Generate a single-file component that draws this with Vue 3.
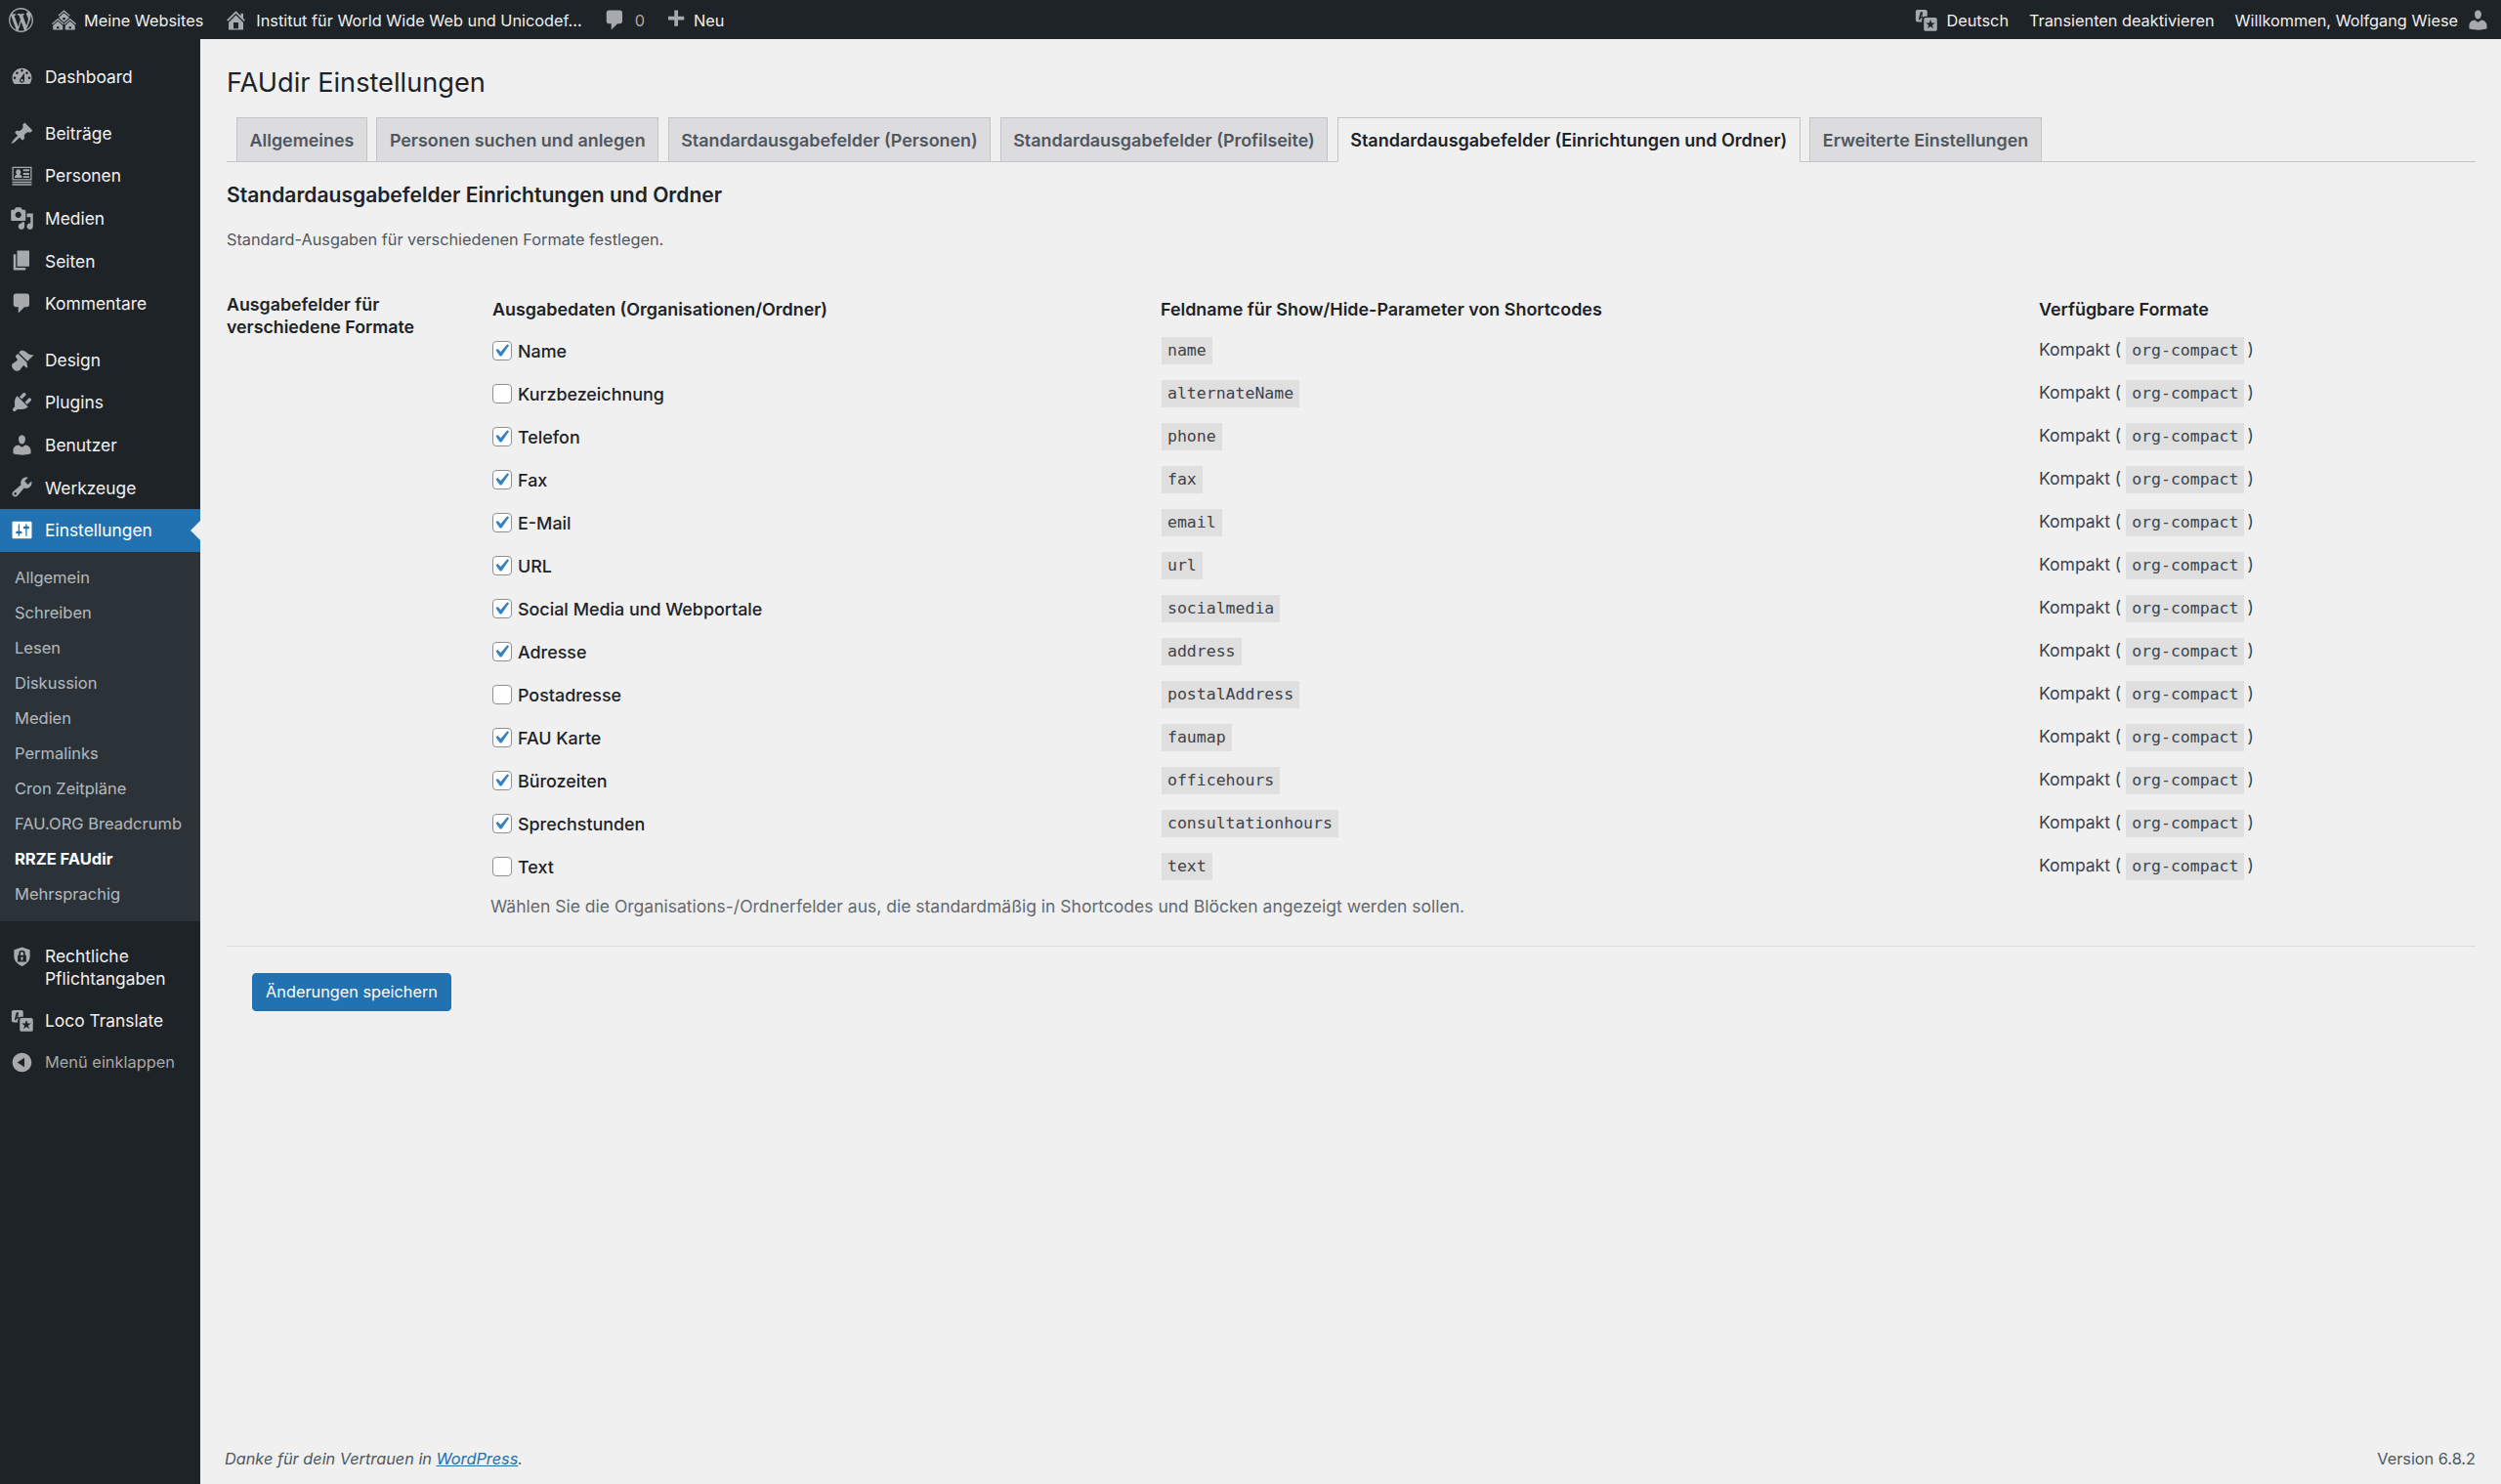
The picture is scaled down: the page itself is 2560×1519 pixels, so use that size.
<template>
  <div class="page">
    <header class="adminbar">
      <div class="bar-left">
        <svg class="bar-logo" viewBox="0 0 20 20"><path :d="icons.wp" /></svg>
        <a class="bar-item"><svg viewBox="0 0 20 20"><path :d="icons.multisite" /></svg>Meine Websites</a>
        <a class="bar-item site"><svg viewBox="0 0 20 20"><path :d="icons.home" /></svg>Institut für World Wide Web und Unicodef...</a>
        <a class="bar-item comments"><svg viewBox="0 0 20 20"><path :d="icons.comments" /></svg><span class="count">0</span></a>
        <a class="bar-item new"><svg viewBox="0 0 20 20"><path :d="icons.plus" /></svg>Neu</a>
      </div>
      <div class="bar-right">
        <a class="bar-item"><svg viewBox="0 0 20 20"><path fill-rule="evenodd" :d="icons.translate" /></svg>Deutsch</a>
        <a class="bar-item">Transienten deaktivieren</a>
        <a class="bar-item howdy">Willkommen, Wolfgang Wiese<svg viewBox="0 0 20 20"><path :d="icons.users" /></svg></a>
      </div>
    </header>

    <div class="body">
      <aside class="sidebar">
        <nav class="menu">
          <template v-for="item in menu" :key="item.label">
            <a class="menu-item" :class="{ active: item.active, gap: item.gap, tall: item.tall }">
              <svg viewBox="0 0 20 20"><path fill-rule="evenodd" :d="icons[item.icon]" /></svg>
              <span>{{ item.label }}</span>
            </a>
            <div v-if="item.active" class="submenu">
              <a v-for="sub in submenu" :key="sub" :class="{ current: sub === 'RRZE FAUdir' }">{{ sub }}</a>
            </div>
          </template>
          <a class="menu-item collapse">
            <svg viewBox="0 0 20 20"><path :d="icons.collapse" /></svg>
            <span>Menü einklappen</span>
          </a>
        </nav>
      </aside>

      <main class="content">
        <h1>FAUdir Einstellungen</h1>
        <div class="tabs">
          <a v-for="tab in tabs" :key="tab" class="tab" :class="{ active: tab === activeTab }">{{ tab }}</a>
        </div>

        <h2>Standardausgabefelder Einrichtungen und Ordner</h2>
        <p class="intro">Standard-Ausgaben für verschiedenen Formate festlegen.</p>

        <div class="form-row">
          <div class="form-label">Ausgabefelder für verschiedene Formate</div>
          <div class="form-field">
            <div class="grid-row head">
              <div>Ausgabedaten (Organisationen/Ordner)</div>
              <div>Feldname für Show/Hide-Parameter von Shortcodes</div>
              <div>Verfügbare Formate</div>
            </div>
            <div v-for="row in rows" :key="row.key" class="grid-row">
              <label class="check">
                <span class="box">
                  <svg v-if="row.on" viewBox="0 0 20 20"><path d="M14.83 4.89l1.34.94-5.81 8.38H9.02L5.78 9.67l1.34-1.25 2.57 2.4z" /></svg>
                </span>
                {{ row.label }}
              </label>
              <div class="key"><code>{{ row.key }}</code></div>
              <div class="format">Kompakt ( <code>org-compact</code> )</div>
            </div>
            <p class="help">Wählen Sie die Organisations-/Ordnerfelder aus, die standardmäßig in Shortcodes und Blöcken angezeigt werden sollen.</p>
          </div>
        </div>

        <hr />
        <button class="save" type="button">Änderungen speichern</button>

        <footer class="footer">
          <span class="thanks">Danke für dein Vertrauen in <a>WordPress</a>.</span>
          <span>Version 6.8.2</span>
        </footer>
      </main>
    </div>
  </div>
</template>

<script setup>
const icons = {
  wp: 'M20 10c0-5.51-4.49-10-10-10C4.48 0 0 4.49 0 10c0 5.52 4.48 10 10 10 5.51 0 10-4.48 10-10zM7.78 15.37L4.37 6.22c.55-.02 1.17-.08 1.17-.08.5-.06.44-1.13-.06-1.11 0 0-1.45.11-2.37.11-.18 0-.37 0-.58-.01C4.12 2.69 6.87 1.11 10 1.11c2.33 0 4.45.87 6.05 2.34-.68-.11-1.65.39-1.65 1.58 0 .74.45 1.36.9 2.1.35.61.55 1.36.55 2.46 0 1.49-1.4 5-1.4 5l-3.03-8.37c.54-.02.82-.17.82-.17.5-.05.44-1.25-.06-1.22 0 0-1.44.12-2.38.12-.87 0-2.33-.12-2.33-.12-.5-.03-.56 1.2-.06 1.22l.92.08 1.26 3.41zM17.41 10c.24-.64.74-1.87.43-4.25.7 1.29 1.05 2.71 1.05 4.25 0 3.29-1.73 6.24-4.4 7.78.97-2.59 1.94-5.2 2.92-7.78zM6.1 18.09C3.12 16.65 1.11 13.53 1.11 10c0-1.3.23-2.48.72-3.59C3.25 10.3 4.67 14.2 6.1 18.09zm4.03-6.63l2.58 6.98c-.86.29-1.76.45-2.71.45-.79 0-1.57-.11-2.29-.33.81-2.38 1.62-4.74 2.42-7.1z',
  multisite: 'M14.27 6.87L10 3.14 5.73 6.87 5 6.14l5-4.38 5 4.38zM14 8.42l-4.05 3.43L6 8.38v-.74l4-3.5 4 3.5v.78zM11 9.7V8H9v1.7h2zm-1.73 4.03L5 10 .73 13.73 0 13l5-4.38L10 13zm10 0L15 10l-4.27 3.73L10 13l5-4.38L20 13zM5 11l4 3.5V18H1v-3.5zm10 0l4 3.5V18h-8v-3.5zM6 17v-1.7H4V17h2zm10 0v-1.7h-2V17h2z',
  home: 'M16 8.5l1.53 1.53-1.06 1.06L10 4.62l-6.47 6.47-1.06-1.06L10 2.5l4 4v-2h2v4zm-6-2.46l6 5.99V18H4v-5.97zM12 17v-5H8v5h4z',
  comments: 'M5 2h9c1.1 0 2 .9 2 2v7c0 1.1-.9 2-2 2h-2l-5 5v-5H5c-1.1 0-2-.9-2-2V4c0-1.1.9-2 2-2z',
  plus: 'M17 7v3h-5v5H9v-5H4V7h5V2h3v5h5z',
  translate: 'M3 1.500h6.500A1.500 1.500 0 0 1 11 3v4H9.500A3 3 0 0 0 6.500 10v1.500H3A1.500 1.500 0 0 1 1.500 10V3A1.500 1.500 0 0 1 3 1.500zM3.800 9.800h1.300l.4-1.500h1.100l-.3 1h.8V3.300H5.400zM5.800 7.200l.8-2.500v2.500zM9.700 8h7.800A1.500 1.500 0 0 1 19 9.500v8a1.500 1.500 0 0 1-1.500 1.500H9.700a1.500 1.500 0 0 1-1.500-1.500v-8A1.500 1.500 0 0 1 9.700 8zM13.600 9.600l-1 2.800H9.800l2.300 1.700-.9 2.800 2.400-1.700 2.400 1.700-.9-2.800 2.300-1.700h-2.800z',
  users: 'M10 9.25c-2.27 0-2.73-3.44-2.73-3.44C7 4.02 7.82 2 9.97 2c2.16 0 2.98 2.02 2.71 3.81 0 0-.41 3.44-2.68 3.44zm0 2.57L12.72 10c2.39 0 4.52 2.33 4.52 4.53v2.49s-3.65 1.13-7.24 1.13c-3.65 0-7.24-1.13-7.24-1.13v-2.49c0-2.25 1.94-4.48 4.47-4.48z',
  dashboard: 'M3.76 16h12.48c1.1-1.37 1.76-3.11 1.76-5 0-4.42-3.58-8-8-8s-8 3.58-8 8c0 1.89.66 3.63 1.76 5zM10 4c.55 0 1 .45 1 1s-.45 1-1 1-1-.45-1-1 .45-1 1-1zM6 6c.55 0 1 .45 1 1s-.45 1-1 1-1-.45-1-1 .45-1 1-1zm8 0c.55 0 1 .45 1 1s-.45 1-1 1-1-.45-1-1 .45-1 1-1zm-5.37 5.550L12 7v6c0 1.100-.9 2-2 2s-2-.9-2-2c0-.57.24-1.080.63-1.450zM4 10c.55 0 1 .45 1 1s-.45 1-1 1-1-.45-1-1 .45-1 1-1zm12 0c.55 0 1 .45 1 1s-.45 1-1 1-1-.45-1-1 .45-1 1-1zm-5 3c0-.55-.45-1-1-1s-1 .45-1 1 .45 1 1 1 1-.45 1-1z',
  post: 'M10.44 3.02l1.82-1.82 6.36 6.35-1.83 1.82c-1.05-.68-2.48-.57-3.41.36l-.75.75c-.92.93-1.04 2.35-.35 3.41l-1.83 1.82-2.41-2.41-2.8 2.79c-.42.42-3.38 2.71-3.8 2.29s1.86-3.39 2.28-3.81l2.79-2.79L4.100 9.360l1.830-1.820c1.050.69 2.480.57 3.400-.36l.75-.75c.93-.92 1.050-2.350.36-3.410z',
  person: 'M2 3h16v11H2zM3 4v9h14V4zM4 12c0-1.800.8-2.500 2-2.800-.8-.5-1-1.200-1-1.900C5 6 5.900 5 7 5s2 1 2 2.300c0 .7-.2 1.400-1 1.900 1.200.3 2 1 2 2.800zM11 5h5v1.500h-5zM11 8h5v1.500h-5zM11 10.500h5V12h-5zM2 15h16v1.200H2zM2 17h16v1.200H2z',
  media: 'M13 11V4c0-.55-.45-1-1-1h-1.670L9 1H5L3.670 3H2c-.55 0-1 .45-1 1v7c0 .55.45 1 1 1h10c.55 0 1-.45 1-1zM7 4.500c1.380 0 2.500 1.120 2.500 2.500S8.380 9.500 7 9.500 4.500 8.380 4.500 7 5.620 4.500 7 4.500zM14 6h5v10.500c0 1.380-1.120 2.500-2.500 2.500S14 17.880 14 16.500s1.120-2.500 2.500-2.500c.17 0 .34.02.5.05V9h-3V6zm-4 8.050V13h2v3.500c0 1.380-1.120 2.500-2.500 2.500S7 17.880 7 16.500 8.120 14 9.500 14c.17 0 .34.02.5.05z',
  page: 'M6 15V2h10v13H6zm-1 1h8v2H3V5h2v11z',
  appearance: 'M14.480 11.060L7.410 3.990l1.500-1.500c.5-.56 2.300-.47 3.510.32 1.210.8 1.430 1.280 2.910 2.100 1.180.64 2.450 1.260 4.450.85zm-.71.71L6.700 4.700 4.930 6.470c-.39.39-.39 1.020 0 1.410l1.060 1.060c.39.39.39 1.030 0 1.420-.6.6-1.430 1.110-2.210 1.690-.35.26-.7.53-1.010.84C1.430 13.230.99 15.600 3.140 17.750c1.330 1.330 3.890 1.640 5.070.46.31-.31.58-.66.84-1.010.58-.78 1.090-1.610 1.690-2.210.39-.39 1.030-.39 1.420 0l1.060 1.060c.39.39 1.020.39 1.410 0z',
  plugins: 'M13.110 4.360L9.870 7.600 8 5.730l3.240-3.240c.35-.34 1.050-.2 1.560.32.52.51.66 1.210.31 1.550zm-8 1.770l.91-1.120 9.010 9.010-1.190.84c-.71.71-2.630 1.160-3.820 1.160H6.140L4.900 17.260c-.59.59-1.540.59-2.120 0-.59-.58-.59-1.530 0-2.120l1.240-1.240v-3.880c0-1.130.4-3.190 1.090-3.890zm7.260 3.970l3.240-3.240c.34-.35 1.040-.21 1.550.31.52.51.66 1.210.31 1.550l-3.240 3.250z',
  tools: 'M16.680 9.770c-1.340 1.340-3.300 1.670-4.950.99l-5.410 6.520c-.99.99-2.590.99-3.580 0s-.99-2.590 0-3.570l6.520-5.420c-.68-1.650-.35-3.610.99-4.950 1.280-1.280 3.120-1.620 4.720-1.060l-2.890 2.890 2.820 2.820 2.860-2.870c.53 1.580.18 3.390-1.080 4.650zM3.810 16.210c.4.39 1.040.39 1.430 0 .4-.4.4-1.040 0-1.430-.39-.4-1.030-.4-1.430 0-.39.39-.39 1.030 0 1.430z',
  settings: 'M18 16V4c0-.55-.45-1-1-1H3c-.55 0-1 .45-1 1v12c0 .55.45 1 1 1h14c.55 0 1-.45 1-1zM8 11h1c.55 0 1 .45 1 1s-.45 1-1 1H8v1.500c0 .28-.22.5-.5.5s-.5-.22-.5-.5V13H6c-.55 0-1-.45-1-1s.45-1 1-1h1V5.500c0-.28.22-.5.5-.5s.5.22.5.5V11zm5-2h-1c-.55 0-1-.45-1-1s.45-1 1-1h1V5.500c0-.28.22-.5.5-.5s.5.22.5.5V7h1c.55 0 1 .45 1 1s-.45 1-1 1h-1v5.500c0 .28-.22.5-.5.5s-.5-.22-.5-.5V9z',
  shield: 'M10 2l6.500 2.200v5.300c0 3.800-3 6.400-6.500 8-3.500-1.600-6.500-4.200-6.500-8V4.200zM10 4.500A2.600 2.600 0 0 0 7.400 7.100V8.500H6.500v5.500h7V8.500h-.9V7.100A2.600 2.600 0 0 0 10 4.500zM10 5.800a1.300 1.300 0 0 1 1.300 1.300v1.400H8.700V7.100A1.300 1.300 0 0 1 10 5.800zM10 10a1 1 0 0 1 .5 1.900v1H9.500v-1A1 1 0 0 1 10 10z',
  collapse: 'M10 2.160c4.330 0 7.840 3.510 7.840 7.840s-3.510 7.840-7.840 7.840S2.160 14.330 2.160 10 5.710 2.160 10 2.160zm2 11.720V6.120L6.180 9.970z'
}

const menu = [
  { label: 'Dashboard', icon: 'dashboard' },
  { label: 'Beiträge', icon: 'post', gap: true },
  { label: 'Personen', icon: 'person' },
  { label: 'Medien', icon: 'media' },
  { label: 'Seiten', icon: 'page' },
  { label: 'Kommentare', icon: 'comments' },
  { label: 'Design', icon: 'appearance', gap: true },
  { label: 'Plugins', icon: 'plugins' },
  { label: 'Benutzer', icon: 'users' },
  { label: 'Werkzeuge', icon: 'tools' },
  { label: 'Einstellungen', icon: 'settings', active: true },
  { label: 'Rechtliche Pflichtangaben', icon: 'shield', gap: true, tall: true },
  { label: 'Loco Translate', icon: 'translate' }
]

const submenu = [
  'Allgemein',
  'Schreiben',
  'Lesen',
  'Diskussion',
  'Medien',
  'Permalinks',
  'Cron Zeitpläne',
  'FAU.ORG Breadcrumb',
  'RRZE FAUdir',
  'Mehrsprachig'
]

const tabs = [
  'Allgemeines',
  'Personen suchen und anlegen',
  'Standardausgabefelder (Personen)',
  'Standardausgabefelder (Profilseite)',
  'Standardausgabefelder (Einrichtungen und Ordner)',
  'Erweiterte Einstellungen'
]
const activeTab = 'Standardausgabefelder (Einrichtungen und Ordner)'

const rows = [
  { label: 'Name', key: 'name', on: true },
  { label: 'Kurzbezeichnung', key: 'alternateName', on: false },
  { label: 'Telefon', key: 'phone', on: true },
  { label: 'Fax', key: 'fax', on: true },
  { label: 'E-Mail', key: 'email', on: true },
  { label: 'URL', key: 'url', on: true },
  { label: 'Social Media und Webportale', key: 'socialmedia', on: true },
  { label: 'Adresse', key: 'address', on: true },
  { label: 'Postadresse', key: 'postalAddress', on: false },
  { label: 'FAU Karte', key: 'faumap', on: true },
  { label: 'Bürozeiten', key: 'officehours', on: true },
  { label: 'Sprechstunden', key: 'consultationhours', on: true },
  { label: 'Text', key: 'text', on: false }
]
</script>

<style>
body {
  margin: 0;
  background: #f0f0f1;
}
</style>

<style scoped>
.page {
  height: 1519px;
  display: flex;
  flex-direction: column;
  overflow: hidden;
  font-family: Inter, "Liberation Sans", sans-serif;
  font-size: 16.3px;
  line-height: 23px;
  color: #3c434a;
  background: #f0f0f1;
}

/* admin bar */
.adminbar {
  height: 40px;
  flex: none;
  display: flex;
  justify-content: space-between;
  background: #1d2327;
  color: #f0f0f1;
}

.bar-left,
.bar-right {
  display: flex;
  align-items: center;
}

.bar-item {
  display: flex;
  align-items: center;
  gap: 8px;
  padding-top: 2px;
  white-space: nowrap;
}

.adminbar svg {
  width: 25px;
  height: 25px;
  fill: #a7aaad;
  flex: none;
}

.bar-item svg {
  margin-top: -2px;
}

.bar-logo {
  margin: 0 19px 0 9px;
}

.site {
  margin-left: 21px;
}

.comments {
  margin-left: 21px;
  gap: 8px;
}

.count {
  color: #a7aaad;
}

.new {
  margin-left: 19px;
  gap: 6px;
}

.bar-right .bar-item + .bar-item {
  margin-left: 21px;
}

.howdy {
  margin-right: 11px;
}

.body {
  flex: 1;
  display: flex;
  min-height: 0;
}

/* sidebar */
.sidebar {
  width: 205px;
  flex: none;
  background: #1d2327;
  color: #f0f0f1;
  font-size: 17.4px;
}

.menu {
  padding-top: 17px;
}

.menu-item {
  position: relative;
  display: flex;
  align-items: center;
  min-height: 43.6px;
  padding-left: 46px;
}

.menu-item svg {
  position: absolute;
  left: 10px;
  top: 9px;
  width: 25px;
  height: 25px;
  fill: #a7aaad;
}

.menu-item.gap {
  margin-top: 14px;
}

.menu-item.tall {
  padding-right: 20px;
  padding-top: 10px;
  padding-bottom: 10px;
}

.menu-item.tall svg {
  top: 10px;
}

.menu-item.active {
  background: #2271b1;
  color: #fff;
}

.menu-item.active svg {
  fill: #fff;
}

.menu-item.active::after {
  content: "";
  position: absolute;
  right: 0;
  top: 50%;
  margin-top: -10px;
  border: 10px solid transparent;
  border-left: 0;
  border-right-color: #f0f0f1;
}

.submenu {
  display: flex;
  flex-direction: column;
  padding: 8px 0 10px 15px;
  background: #2c3338;
  color: rgba(240, 246, 252, 0.7);
  font-size: 16.5px;
}

.submenu a {
  height: 36px;
  line-height: 36px;
}

.submenu .current {
  color: #fff;
  font-weight: 700;
}

.collapse {
  color: #a7aaad;
  font-size: 16.4px;
}

/* content */
.content {
  flex: 1;
  min-width: 0;
  display: flex;
  flex-direction: column;
  padding: 0 26px 0 27px;
}

h1 {
  margin: 26px 0 0;
  font-size: 27.2px;
  line-height: 38px;
  font-weight: 400;
  color: #1d2327;
}

.tabs {
  display: flex;
  gap: 9.5px;
  height: 45px;
  margin-top: 16px;
  padding-left: 10px;
  border-bottom: 1px solid #c3c4c7;
}

.tab {
  display: flex;
  align-items: center;
  height: 45px;
  box-sizing: border-box;
  padding: 0 12.5px;
  border: 1px solid #c3c4c7;
  border-bottom: 0;
  background: #dcdcde;
  color: #50575e;
  font-size: 17.9px;
  font-weight: 600;
  white-space: nowrap;
}

.tab.active {
  height: 46px;
  background: #f0f0f1;
  border-bottom: 1px solid #f0f0f1;
  color: #1d2327;
  font-size: 18px;
}

h2 {
  margin: 20px 0 0;
  font-size: 21.05px;
  line-height: 28px;
  font-weight: 600;
  color: #1d2327;
}

.intro {
  margin: 20px 0 0;
  color: #50575e;
}

.form-row {
  display: flex;
  margin-top: 43px;
  font-size: 17.5px;
}

.form-label {
  width: 272px;
  flex: none;
  box-sizing: border-box;
  padding-right: 40px;
  font-size: 17.8px;
  font-weight: 600;
  color: #1d2327;
}

.form-field {
  flex: 1;
  min-width: 0;
}

.grid-row {
  display: grid;
  grid-template-columns: 684px 899px 1fr;
  align-items: center;
  height: 44px;
  white-space: nowrap;
}

.grid-row.head {
  height: 32px;
  margin-bottom: 5px;
  font-size: 17.9px;
  font-weight: 600;
  color: #1d2327;
}

.check {
  display: flex;
  align-items: center;
  gap: 6px;
  font-size: 17.9px;
  font-weight: 500;
  color: #1d2327;
}

.box {
  width: 20px;
  height: 20px;
  flex: none;
  box-sizing: border-box;
  border: 1px solid #8c8f94;
  border-radius: 4px;
  background: #fff;
}

.box svg {
  display: block;
  width: 26px;
  height: 26px;
  margin: -4px 0 0 -5px;
  fill: #3582c4;
}

code {
  display: inline-block;
  padding: 2px 6px;
  background: rgba(0, 0, 0, 0.07);
  font-family: "DejaVu Sans Mono", monospace;
  font-size: 16.5px;
  line-height: 24px;
}

.key code {
  margin-left: 1px;
}

.format code {
  margin-right: -2px;
}

.help {
  margin: 0 0 0 -2px;
  padding-top: 7px;
  color: #646970;
}

hr {
  width: 100%;
  height: 0;
  margin: 29px 0 0;
  border: 0;
  border-top: 1px solid #dcdcde;
}

.save {
  align-self: flex-start;
  width: 204px;
  height: 39px;
  margin: 27px 0 0 26px;
  padding: 0;
  border: 1px solid #2271b1;
  border-radius: 4px;
  background: #2271b1;
  color: #fff;
  font: inherit;
}

.footer {
  display: flex;
  justify-content: space-between;
  margin-top: auto;
  margin-left: -2px;
  padding-bottom: 14px;
  color: #50575e;
}

.thanks {
  font-style: italic;
}

.thanks a {
  color: #2271b1;
  text-decoration: underline;
}
</style>
